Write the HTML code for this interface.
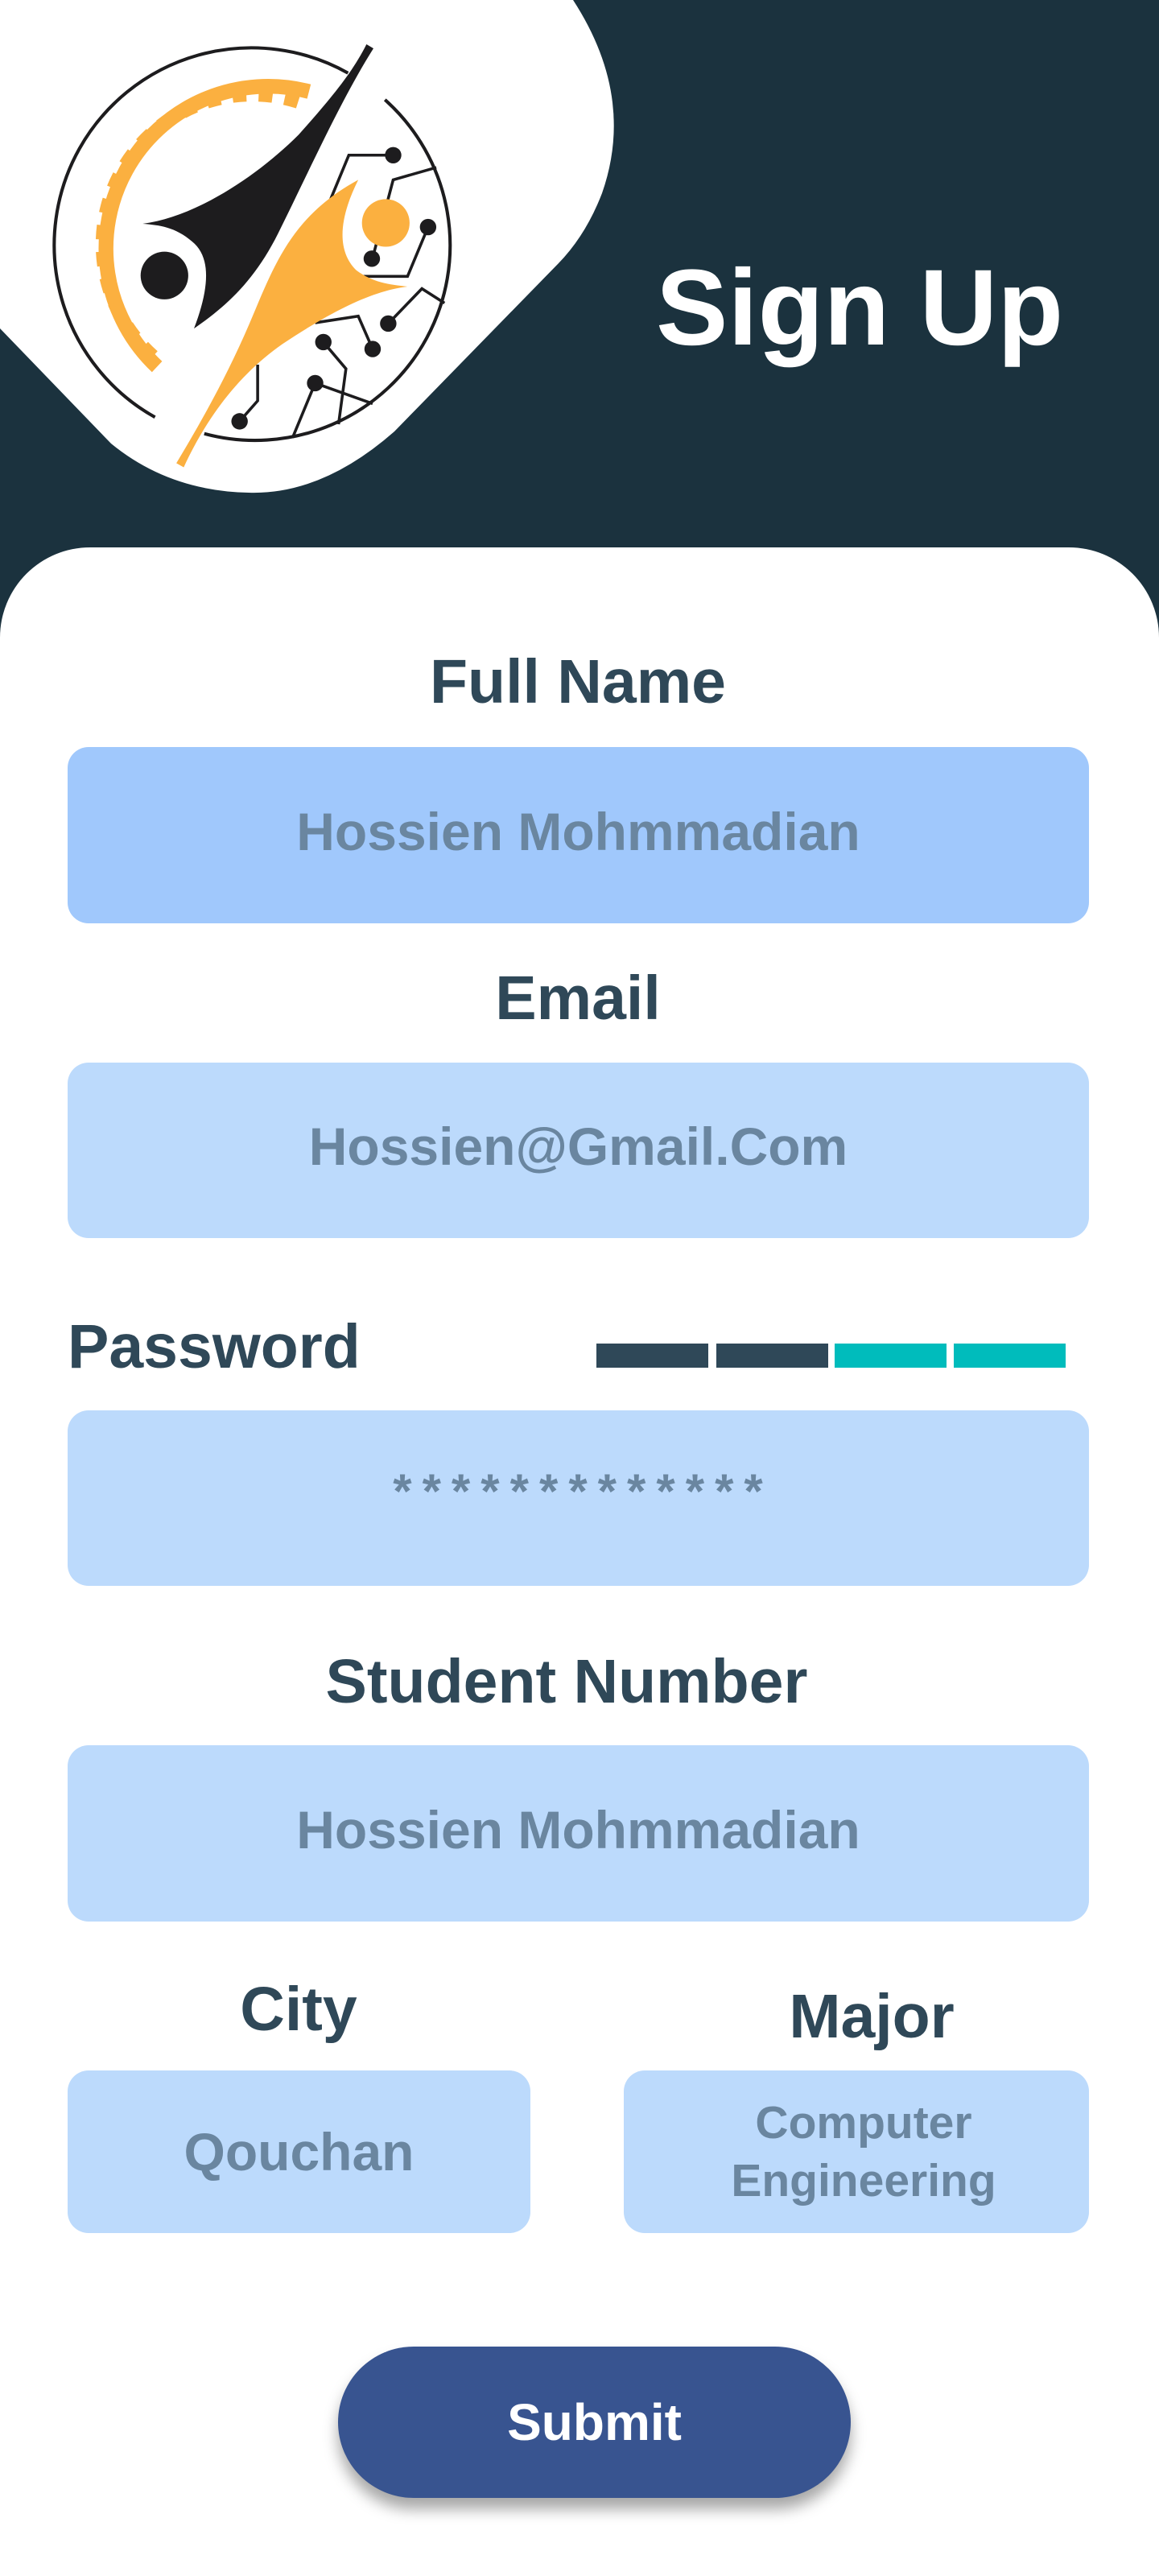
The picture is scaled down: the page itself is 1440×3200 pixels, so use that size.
<!DOCTYPE html>
<html><head><meta charset="utf-8">
<style>
*{margin:0;padding:0;box-sizing:border-box}
body{width:1440px;height:3200px;position:relative;background:#1b323e;overflow:hidden;font-family:"Liberation Sans",Arial,sans-serif;font-weight:bold}
.card{position:absolute;left:0;top:680px;width:1440px;height:2520px;background:#fff;border-radius:112px 112px 0 0}
.lbl{position:absolute;color:#2f4858;font-size:77px;line-height:1;white-space:nowrap}
.c{transform:translateX(-50%)}
.inp{position:absolute;background:#bcdafc;border-radius:26px;color:#6a86a0;font-size:66px;display:flex;align-items:center;justify-content:center;text-align:center}
.bar{position:absolute;top:1669px;height:30px;width:139px}
</style></head><body>
<svg style="position:absolute;left:0;top:0" width="800" height="800" viewBox="0 0 800 800">
<path d="M0 0 H712 Q790 120 748 240 Q728 292 694 327 L490 536 Q400 615 309 612 Q210 610 138 551 L0 408 Z" fill="#fff"/>
<g transform="translate(14,4) scale(0.5102)">
<path d="M350 1008 A475 475 0 1 1 820 170" fill="none" stroke="#1d1c1e" stroke-width="8"/>
<path d="M910 235 A475 475 0 0 1 470 1048" fill="none" stroke="#1d1c1e" stroke-width="8"/>
<path d="M355 885 A395 395 0 0 1 725 215" fill="none" stroke="#fbb040" stroke-width="36"/>
<path d="M345 860 A365 365 0 0 1 700 240" fill="none" stroke="#fbb040" stroke-width="34" stroke-dasharray="34 30"/>
<g fill="none" stroke="#1d1c1e" stroke-width="7">
<polyline points="930,370 822,370 760,520"/>
<polyline points="1035,400 930,430 880,620"/>
<polyline points="1015,545 965,665 850,665"/>
<polyline points="918,780 1000,695 1055,730"/>
<polyline points="880,842 845,762 740,778"/>
<polyline points="760,825 815,890 797,1025"/>
<polyline points="740,925 880,975"/>
<polyline points="740,925 685,1058"/>
<polyline points="556,1018 600,968 600,880"/>
</g>
<g fill="#1d1c1e">
<circle cx="930" cy="370" r="20"/><circle cx="1015" cy="545" r="20"/><circle cx="878" cy="622" r="20"/>
<circle cx="918" cy="780" r="20"/><circle cx="880" cy="842" r="20"/><circle cx="760" cy="825" r="20"/>
<circle cx="740" cy="925" r="20"/><circle cx="556" cy="1018" r="20"/>
<circle cx="373" cy="663" r="58"/>
<path d="M865 100 L882 110 C800 240 720 420 650 560 C590 680 520 740 445 792 C480 700 490 620 440 580 C400 545 360 540 320 537 C450 520 600 420 700 320 C780 230 830 170 865 100 Z"/>
</g>
<g fill="#fbb040">
<circle cx="912" cy="535" r="58"/>
<path d="M845 430 C800 520 790 600 840 650 C880 680 920 685 965 690 C880 700 780 750 660 830 C560 900 480 1000 420 1130 L402 1120 C450 1040 520 920 580 780 C640 640 680 520 845 430 Z"/>
</g>
</g>
</svg>
<div style="position:absolute;left:815px;top:316px;color:#fff;font-size:134px;line-height:1;white-space:nowrap">Sign Up</div>
<div class="card"></div>
<div class="lbl c" style="left:718px;top:809px">Full Name</div>
<div class="inp" style="left:84px;top:928px;width:1269px;height:219px;background:#a0c8fc;padding-bottom:10px">Hossien Mohmmadian</div>
<div class="lbl c" style="left:718px;top:1202px">Email</div>
<div class="inp" style="left:84px;top:1320px;width:1269px;height:218px;padding-bottom:10px">Hossien@Gmail.Com</div>
<div class="lbl" style="left:84px;top:1635px">Password</div>
<div class="bar" style="left:741px;background:#2f4858"></div>
<div class="bar" style="left:890px;background:#2f4858"></div>
<div class="bar" style="left:1037px;background:#00bcbc"></div>
<div class="bar" style="left:1185px;background:#00bcbc"></div>
<div class="inp" style="left:84px;top:1752px;width:1269px;height:218px;align-items:flex-start;padding-top:66px;padding-left:12px;font-size:60px;letter-spacing:13px">*************</div>
<div class="lbl c" style="left:704px;top:2051px">Student Number</div>
<div class="inp" style="left:84px;top:2168px;width:1269px;height:219px;padding-bottom:10px">Hossien Mohmmadian</div>
<div class="lbl c" style="left:371px;top:2458px">City</div>
<div class="lbl c" style="left:1083px;top:2467px">Major</div>
<div class="inp" style="left:84px;top:2572px;width:575px;height:202px">Qouchan</div>
<div class="inp" style="left:775px;top:2572px;width:578px;height:202px;font-size:57px;line-height:72px;padding-left:18px">Computer<br>Engineering</div>
<div style="position:absolute;left:420px;top:2915px;width:637px;height:188px;border-radius:94px;background:#385490;box-shadow:0 14px 18px rgba(0,0,0,0.35);color:#fff;font-size:64px;display:flex;align-items:center;justify-content:center">Submit</div>
</body></html>
